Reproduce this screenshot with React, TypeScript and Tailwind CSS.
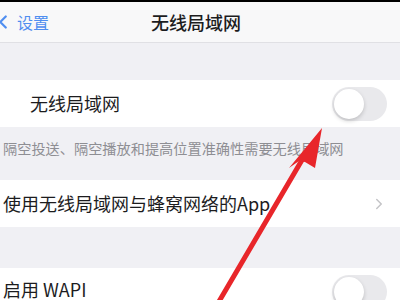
import { ChevronLeft, ChevronRight } from 'lucide-react';

const Toggle = () => (
  <div className="w-[55px] h-[34px] rounded-full bg-[#e9e9ec] p-[2px] flex items-center">
    <div className="w-[30px] h-[30px] rounded-full bg-white shadow-[0_2px_4px_rgba(0,0,0,0.18)]" />
  </div>
);

export default function App() {
  return (
    <div
      className="relative w-[400px] h-[300px] overflow-hidden bg-[#f0f0f4]"
      style={{ fontFamily: '"Noto Sans CJK SC", "Noto Sans", sans-serif' }}
    >
      {/* top edge */}
      <div className="h-[2px] bg-black" />

      {/* Nav bar */}
      <div className="relative h-[41px] bg-[#f8f8f9] border-b border-[#e0e0e4] flex items-center">
        <div className="flex items-center text-[#4f8ef0] -ml-[8px]">
          <ChevronLeft size={22} strokeWidth={2.4} />
          <span className="ml-[3px] text-[16px]">设置</span>
        </div>
        <div className="absolute inset-0 flex items-center justify-center">
          <span className="text-[18px] font-medium text-[#1c1c1e] ml-[-8px]">无线局域网</span>
        </div>
      </div>

      <div className="h-[37px]" />

      {/* Wi-Fi row */}
      <div className="h-[47px] bg-white flex items-center justify-between pl-[30px] pr-[13px]">
        <span className="text-[18px] text-[#1c1c1e]">无线局域网</span>
        <Toggle />
      </div>

      {/* Footnote */}
      <div className="h-[53px] pl-[3px] pt-[8px]">
        <span className="text-[14.2px] text-[#8e8e93] whitespace-nowrap">
          隔空投送、隔空播放和提高位置准确性需要无线局域网
        </span>
      </div>

      {/* Apps row */}
      <div className="h-[47px] bg-white flex items-center justify-between pl-[3px] pr-[12px]">
        <span className="text-[18px] text-[#1c1c1e] whitespace-nowrap">使用无线局域网与蜂窝网络的App</span>
        <ChevronRight size={18} strokeWidth={2} className="text-[#c4c4c7]" />
      </div>

      <div className="h-[41px]" />

      {/* WAPI row */}
      <div className="h-[47px] bg-white flex items-start justify-between pl-[3px] pr-[13px] pt-[7px]">
        <span className="text-[18px] leading-[28px] text-[#1c1c1e]">启用 WAPI</span>
        <Toggle />
      </div>

      {/* Red annotation arrow */}
      <svg className="absolute inset-0 pointer-events-none" width="400" height="300" viewBox="0 0 400 300">
        <line x1="302" y1="160" x2="214" y2="310" stroke="#e8262a" strokeWidth="5" strokeLinecap="round" />
        <polygon points="322,128 315,168 305,162 299,161 289,168" fill="#e8262a" />
      </svg>
    </div>
  );
}
